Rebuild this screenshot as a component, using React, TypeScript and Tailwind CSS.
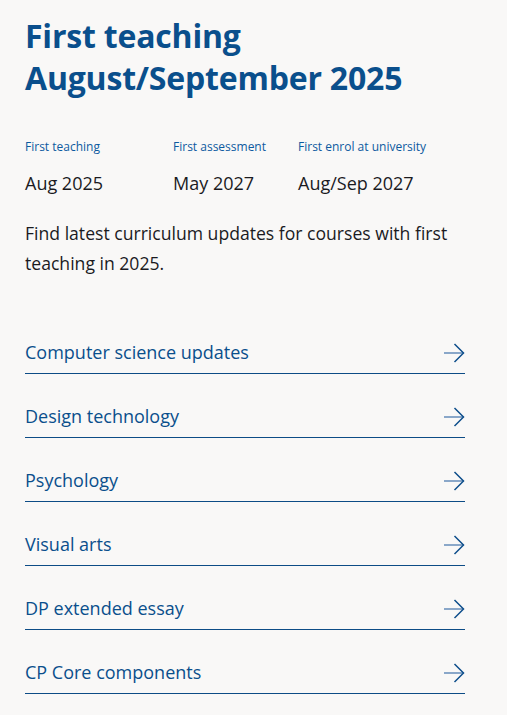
const font = { fontFamily: '"Open Sans", "Noto Sans", sans-serif' };

const facts = [
  { label: "First teaching", value: "Aug 2025", w: "w-[148px]" },
  { label: "First assessment", value: "May 2027", w: "w-[125px]" },
  { label: "First enrol at university", value: "Aug/Sep 2027", w: "" },
];

const links = [
  "Computer science updates",
  "Design technology",
  "Psychology",
  "Visual arts",
  "DP extended essay",
  "CP Core components",
];

function Arrow() {
  return (
    <svg width="21" height="20" viewBox="0 0 21 20" fill="none" className="shrink-0">
      <path d="M0 10H19.5" stroke="#6f93bd" strokeWidth="1.6" />
      <path d="M10.5 1L19.5 10L10.5 19" stroke="#0f4f8b" strokeWidth="1.5" />
    </svg>
  );
}

export default function App() {
  return (
    <div className="min-h-[715px] bg-[#f9f8f7] pl-[25px] pr-[42px] pt-[15px]" style={font}>
      <h1 className="text-[32px] leading-[42px] font-bold text-[#0a4f8c] tracking-[-0.2px]">
        First teaching
        <br />
        August/September 2025
      </h1>

      <div className="flex mt-[40px]">
        {facts.map((f) => (
          <div key={f.label} className={f.w}>
            <div className="text-[12px] leading-[16px] text-[#0d5aa0]">{f.label}</div>
            <div className="mt-[16px] text-[18px] leading-[24px] text-[#1b1b1f]">{f.value}</div>
          </div>
        ))}
      </div>

      <p className="mt-[23px] text-[17.6px] leading-[30px] text-[#1b1b1f]">
        Find latest curriculum updates for courses with first teaching in 2025.
      </p>

      <ul className="mt-[32px]">
        {links.map((l) => (
          <li key={l}>
            <a className="flex items-center justify-between border-b-[1.5px] border-[#0d4c86] h-[64px] pt-[22px] text-[18px] text-[#0a4f8c]">
              <span>{l}</span>
              <Arrow />
            </a>
          </li>
        ))}
      </ul>
    </div>
  );
}
